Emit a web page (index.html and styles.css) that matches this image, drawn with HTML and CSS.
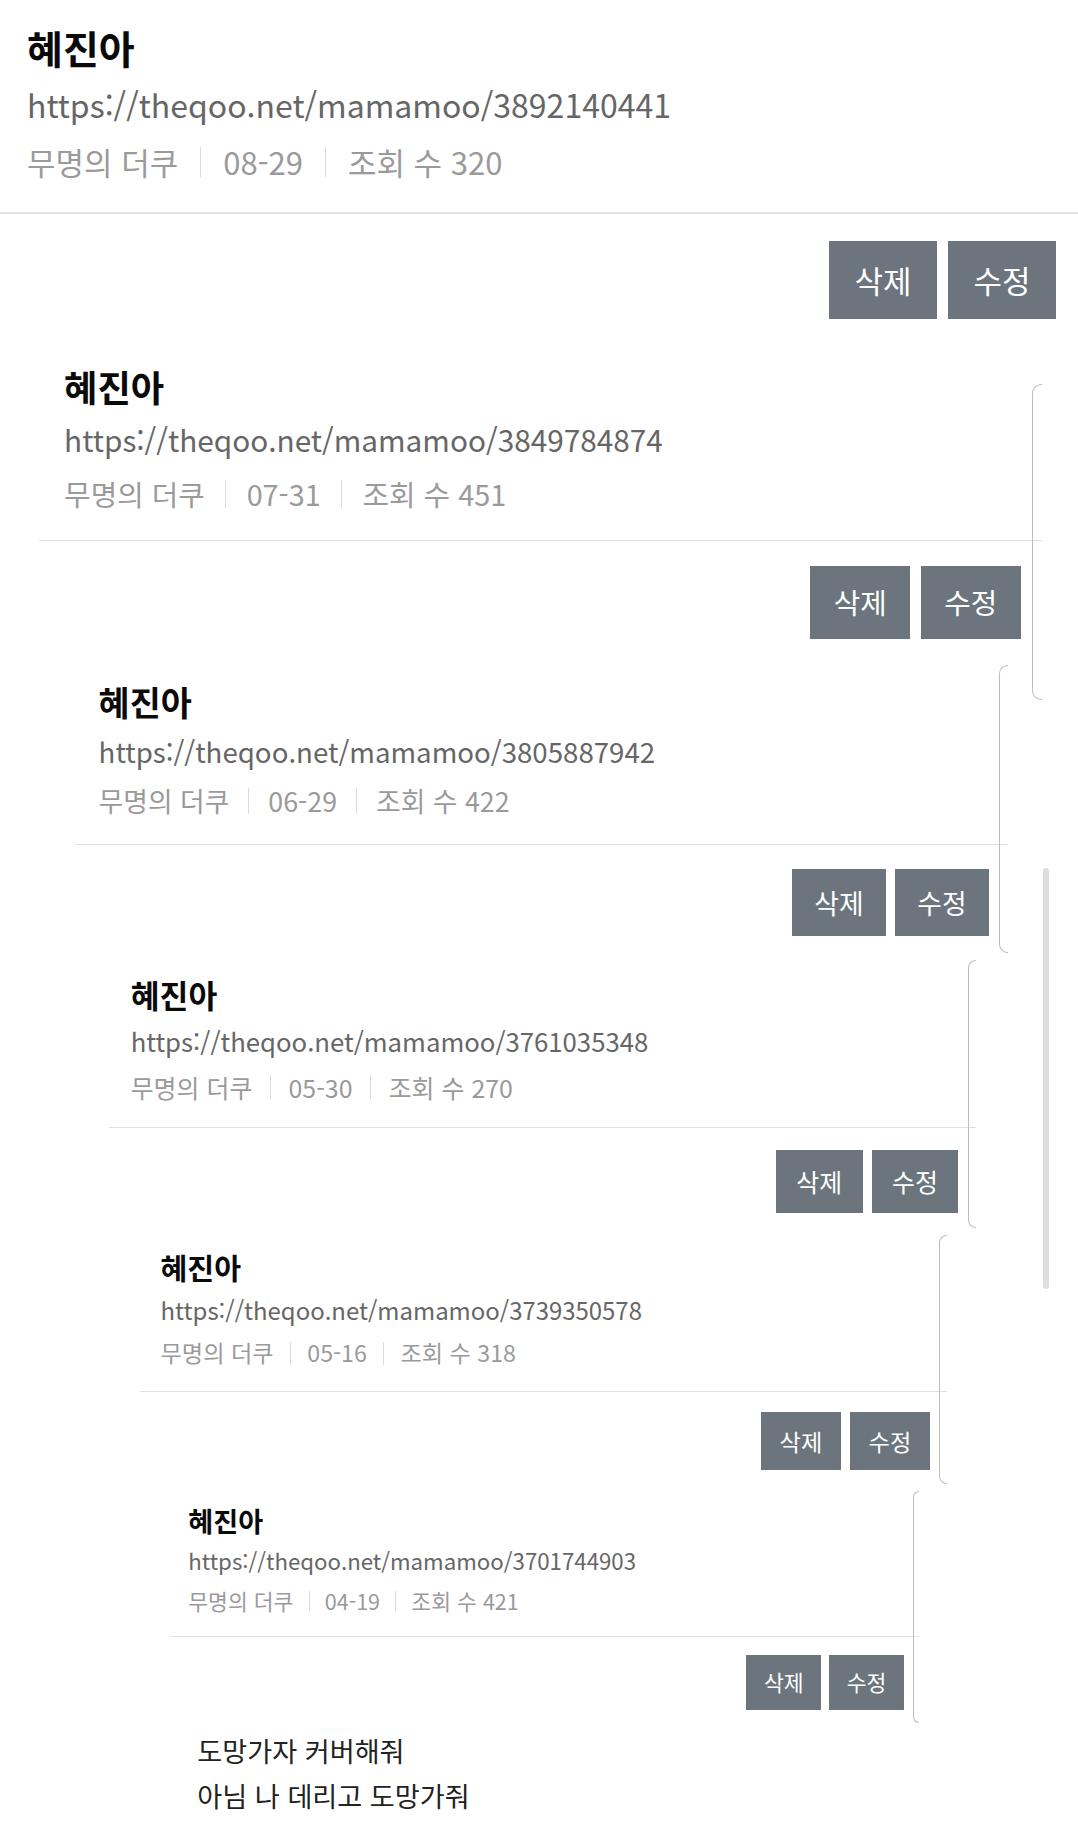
FILE: index.html
```html
<!DOCTYPE html>
<html lang="ko">
<head>
    <meta charset="UTF-8">
    <meta name="viewport" content="width=device-width, initial-scale=1.0">
    <title>혜진아</title>
    <link rel="stylesheet" href="styles.css">
</head>
<body>
<div class="page">
    <div class="post">
        <div class="post-head">
            <h1 class="post-title">혜진아</h1>
            <p class="post-url">https://theqoo.net/mamamoo/3892140441</p>
            <p class="post-meta"><span>무명의 더쿠</span><i class="sep"></i><span>08-29</span><i class="sep"></i><span>조회 수 320</span></p>
        </div>
        <div class="post-actions">
            <button class="btn">삭제</button>
            <button class="btn">수정</button>
        </div>

        <div class="quote">
            <div class="post">
                <span class="bracket bracket-first"></span>
                <div class="post-head">
                    <h1 class="post-title">혜진아</h1>
                    <p class="post-url">https://theqoo.net/mamamoo/3849784874</p>
                    <p class="post-meta"><span>무명의 더쿠</span><i class="sep"></i><span>07-31</span><i class="sep"></i><span>조회 수 451</span></p>
                </div>
                <div class="post-actions">
                    <button class="btn">삭제</button>
                    <button class="btn">수정</button>
                </div>

                <div class="quote">
                    <div class="post">
                        <span class="bracket"></span>
                        <div class="post-head">
                            <h1 class="post-title">혜진아</h1>
                            <p class="post-url">https://theqoo.net/mamamoo/3805887942</p>
                            <p class="post-meta"><span>무명의 더쿠</span><i class="sep"></i><span>06-29</span><i class="sep"></i><span>조회 수 422</span></p>
                        </div>
                        <div class="post-actions">
                            <button class="btn">삭제</button>
                            <button class="btn">수정</button>
                        </div>

                        <div class="quote">
                            <div class="post">
                                <span class="bracket"></span>
                                <div class="post-head">
                                    <h1 class="post-title">혜진아</h1>
                                    <p class="post-url">https://theqoo.net/mamamoo/3761035348</p>
                                    <p class="post-meta"><span>무명의 더쿠</span><i class="sep"></i><span>05-30</span><i class="sep"></i><span>조회 수 270</span></p>
                                </div>
                                <div class="post-actions">
                                    <button class="btn">삭제</button>
                                    <button class="btn">수정</button>
                                </div>

                                <div class="quote">
                                    <div class="post">
                                        <span class="bracket"></span>
                                        <div class="post-head">
                                            <h1 class="post-title">혜진아</h1>
                                            <p class="post-url">https://theqoo.net/mamamoo/3739350578</p>
                                            <p class="post-meta"><span>무명의 더쿠</span><i class="sep"></i><span>05-16</span><i class="sep"></i><span>조회 수 318</span></p>
                                        </div>
                                        <div class="post-actions">
                                            <button class="btn">삭제</button>
                                            <button class="btn">수정</button>
                                        </div>

                                        <div class="quote">
                                            <div class="post">
                                                <span class="bracket"></span>
                                                <div class="post-head">
                                                    <h1 class="post-title">혜진아</h1>
                                                    <p class="post-url">https://theqoo.net/mamamoo/3701744903</p>
                                                    <p class="post-meta"><span>무명의 더쿠</span><i class="sep"></i><span>04-19</span><i class="sep"></i><span>조회 수 421</span></p>
                                                </div>
                                                <div class="post-actions">
                                                    <button class="btn">삭제</button>
                                                    <button class="btn">수정</button>
                                                </div>
                                                <div class="body-text">
                                                    <p>도망가자 커버해줘</p>
                                                    <p>아님 나 데리고 도망가줘</p>
                                                </div>
                                            </div>
                                        </div>
                                    </div>
                                </div>
                            </div>
                        </div>
                    </div>
                </div>
            </div>
        </div>
    </div>
    <div class="scrollbar"></div>
</div>
</body>
</html>
```

FILE: styles.css
```css
* {
    box-sizing: border-box;
}
body {
    margin: 0;
    background: #fff;
    font-family: "Noto Sans CJK KR", "Noto Sans", sans-serif;
}
.page {
    position: relative;
    width: 1078px;
    height: 1824px;
    overflow: hidden;
}
.post {
    position: relative;
    width: 1078px;
}
.post-head {
    padding: 22px 27px 30px;
    border-bottom: 2px solid #e1e1e1;
}
.post-title {
    margin: 0;
    font-size: 39px;
    line-height: 50px;
    font-weight: 700;
    color: #0a0a0a;
}
.post-url {
    margin: 10px 0 0;
    font-size: 32px;
    line-height: 44px;
    color: #666;
}
.post-meta {
    display: flex;
    align-items: center;
    margin: 16px 0 0;
    font-size: 31px;
    line-height: 40px;
    color: #9a9a9a;
}
.sep {
    width: 1px;
    height: 30px;
    margin: 0 22px;
    background: #dcdcdc;
}
.post-actions {
    display: flex;
    justify-content: flex-end;
    gap: 11px;
    padding: 27px 22px 0 0;
}
.btn {
    width: 108px;
    height: 78px;
    padding: 0;
    border: 0;
    border-radius: 0;
    background: #6c757d;
    color: #fff;
    font-family: "Noto Sans CJK KR", sans-serif;
    font-size: 31px;
    line-height: 78px;
}
/* each quoted post is a shrunken copy of the one above */
.quote {
    margin: 24px 0 0 39px;
}
.quote > .post {
    zoom: 0.93;
}
.bracket {
    position: absolute;
    right: 0;
    top: 4px;
    width: 10px;
    height: 333px;
    border: 2px solid #bdbdbd;
    border-right: 0;
    border-radius: 10px 0 0 10px;
}
.bracket-first {
    top: 44px;
    height: 340px;
}
.body-text {
    margin: 26px 0 0 40px;
    font-size: 39px;
    line-height: 65px;
    color: #222;
}
.body-text p {
    margin: 0;
}
.scrollbar {
    position: absolute;
    left: 1043px;
    top: 868px;
    width: 6px;
    height: 421px;
    border-radius: 3px;
    background: #dedede;
}
```
